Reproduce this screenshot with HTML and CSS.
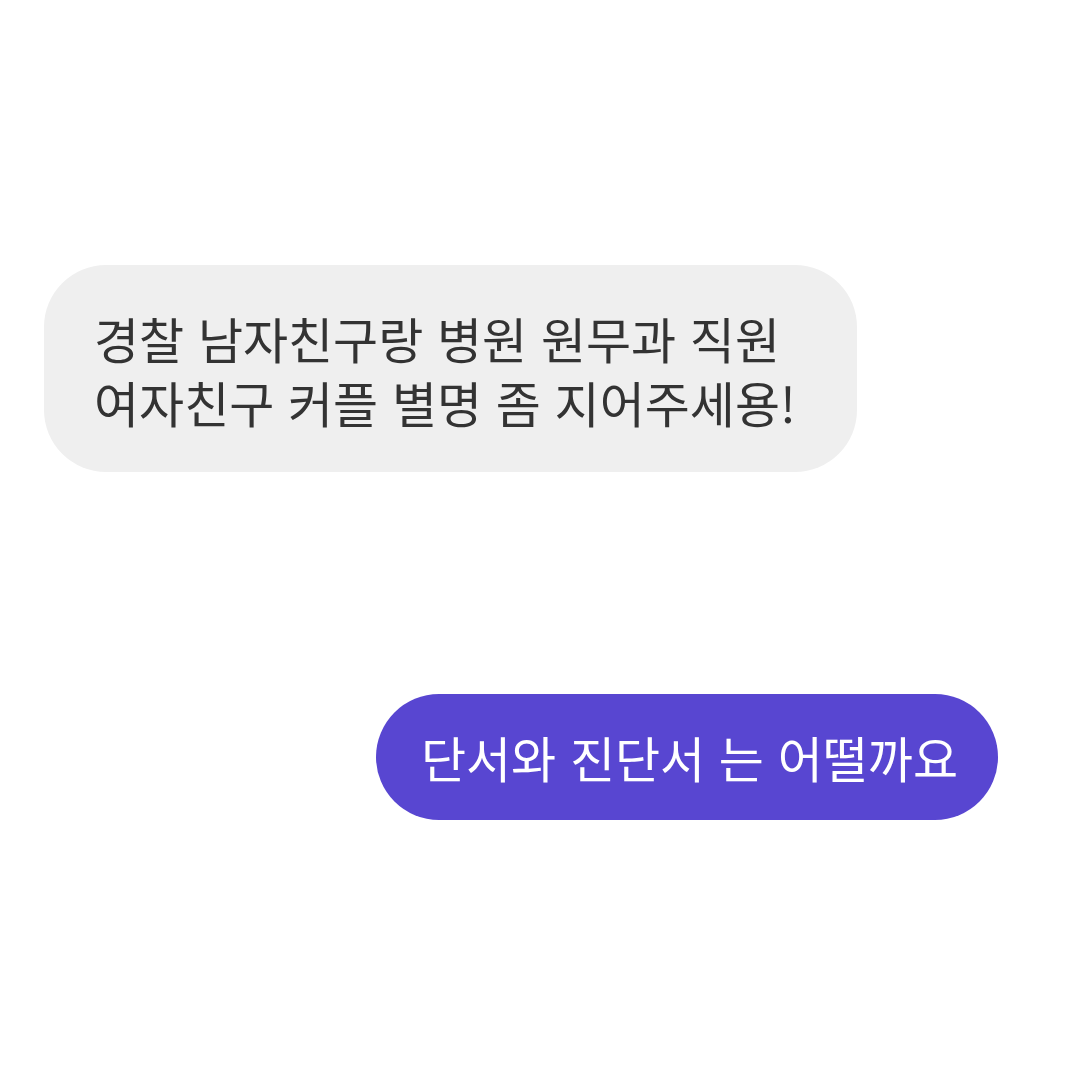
FILE: index.html
```html
<!DOCTYPE html>
<html lang="ko">
<head>
    <meta charset="utf-8">
    <title>대화</title>
    <link rel="stylesheet" href="styles.css">
</head>
<body>
    <div class="chat">
        <div class="bubble received">경찰 남자친구랑 병원 원무과 직원<br>여자친구 커플 별명 좀 지어주세용!</div>
        <div class="bubble sent">단서와 진단서 는 어떨까요</div>
    </div>
</body>
</html>
```

FILE: styles.css
```css
body {
    margin: 0;
    padding: 0;
    background: #ffffff;
    font-family: 'Noto Sans CJK KR', 'Noto Sans', sans-serif;
}
.chat {
    display: flex;
    flex-direction: column;
    padding: 265px 82px 0 44px;
    gap: 222px;
}
.bubble {
    font-size: 49px;
    line-height: 64px;
}
.received {
    align-self: flex-start;
    background: #efefef;
    color: #333333;
    padding: 41px 61px 38px 50px;
    border-radius: 62px;
}
.sent {
    align-self: flex-end;
    background: #5846d1;
    color: #ffffff;
    padding: 31px 40px 31px 45px;
    border-radius: 63px;
}
```
